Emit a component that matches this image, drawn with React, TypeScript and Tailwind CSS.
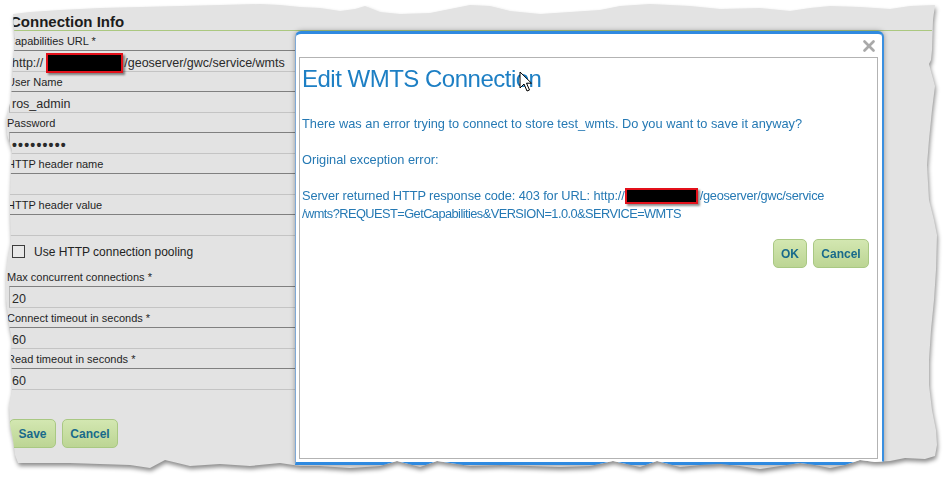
import { X } from "lucide-react";
import type { ReactNode } from "react";

function Redact({ className }: { className: string }) {
  return (
    <span
      className={
        "inline-block bg-black border-2 border-[#e3101a] shadow-[2px_2px_2px_rgba(0,0,0,0.45)] align-middle " +
        className
      }
    />
  );
}

function Field({ label, children }: { label: string; children?: ReactNode }) {
  return (
    <div>
      <div className="h-[19px] pt-[2px] leading-[17px] text-[11px] text-[#1f1f1f] whitespace-nowrap">{label}</div>
      <div className="ml-[2px] h-[22px] w-[600px] border-t border-b border-l border-t-[#808080] border-b-[#c4c4c4] border-l-[#b8b8b8] pl-[2px] pt-[4px] flex items-center text-[12.5px] text-[#2a2a2a] whitespace-nowrap">
        {children}
      </div>
    </div>
  );
}

function GreenButton({ children, className }: { children: ReactNode; className: string }) {
  return (
    <div
      className={
        "h-[29px] flex items-center justify-center rounded-[5px] border border-[#a9c883] bg-gradient-to-b from-[#d3e7b1] to-[#bcd594] text-[12px] font-bold text-[#196a8b] " +
        className
      }
    >
      {children}
    </div>
  );
}

export default function App() {
  return (
    <div className="w-[946px] h-[481px] bg-white overflow-hidden [font-family:'Liberation_Sans',Arial,sans-serif]">
      <div className="w-full h-full [filter:drop-shadow(1px_3px_2px_rgba(0,0,0,0.45))]">
        <div className="relative w-full h-full bg-[#e3e3e3] [clip-path:polygon(13px_14px,30px_12px,60px_10px,100px_8px,140px_7px,180px_6px,220px_5px,260px_4px,280px_5px,300px_7px,320px_8px,340px_11px,355px_9px,365px_6px,380px_12px,400px_14px,430px_13px,450px_9px,470px_5px,490px_6px,510px_11px,540px_14px,570px_12px,600px_10px,620px_6px,650px_4px,690px_6px,720px_9px,760px_8px,790px_11px,810px_8px,830px_6px,860px_7px,890px_9px,910px_6px,935px_5px,933px_20px,932px_50px,931px_60px,929px_64px,932px_75px,935px_86px,932px_110px,929px_140px,927px_165px,929px_200px,934px_220px,937px_235px,936px_270px,934px_300px,931px_330px,929px_360px,929px_385px,932px_410px,936px_430px,937px_445px,935px_456px,925px_459px,905px_458px,890px_461px,875px_462px,860px_460px,845px_465px,830px_468px,815px_465px,800px_463px,780px_466px,760px_469px,740px_466px,720px_464px,700px_465px,680px_467px,657px_461px,640px_467px,613px_461px,590px_466px,560px_467px,530px_466px,500px_465px,470px_466px,437px_461px,420px_467px,397px_461px,380px_466px,350px_468px,320px_466px,300px_466px,280px_463px,250px_466px,220px_464px,190px_466px,165px_460px,150px_468px,130px_465px,100px_464px,70px_463px,40px_463px,18px_463px,15px_455px,13px_440px,10px_425px,9px_405px,12px_390px,12px_375px,11px_355px,12px_340px,9px_325px,6px_300px,6px_272px,8px_255px,11px_240px,10px_215px,10px_195px,11px_170px,12px_150px,7px_135px,6px_118px,11px_100px,12px_83px,13px_62px,15px_42px,14px_28px)]">
          {/* Background form */}
          <div className="pt-[12px] pl-[7px]">
            <div className="w-[925px] h-[19px] pl-[3px] pt-[1px] text-[15px] font-bold leading-[18px] text-[#1c1c1c] border-b border-[#abc880]">
              Connection Info
            </div>
            <Field label="Capabilities URL *">
              <span>http://</span>
              <Redact className="w-[77px] h-[20px] ml-[3px]" />
              <span className="ml-[1px]">/geoserver/gwc/service/wmts</span>
            </Field>
            <Field label="User Name">ros_admin</Field>
            <Field label="Password">
              <span className="text-[14px] tracking-[1.2px] font-bold">•••••••••</span>
            </Field>
            <Field label="HTTP header name" />
            <Field label="HTTP header value" />
            <div className="h-[31px] flex items-center pl-[5px] gap-[9px]">
              <div className="w-[13px] h-[13px] border border-[#3c3c3c] bg-[#e8e8e8]" />
              <span className="text-[12px] text-[#222]">Use HTTP connection pooling</span>
            </div>
            <Field label="Max concurrent connections *">20</Field>
            <Field label="Connect timeout in seconds *">60</Field>
            <Field label="Read timeout in seconds *">60</Field>
            <div className="mt-[29px] ml-[2px] flex gap-[6px]">
              <GreenButton className="w-[47px]">Save</GreenButton>
              <GreenButton className="w-[56px]">Cancel</GreenButton>
            </div>
          </div>

          {/* Modal dialog */}
          <div className="absolute left-[295px] top-[31px] w-[589px] h-[434px] flex flex-col bg-white rounded-t-[6px] border-t-[3px] border-r-2 border-b-[3px] border-l border-t-[#2f8ae0] border-r-[#3a8fe0] border-b-[#2f8ae0] border-l-[#7fa9d6] shadow-[0_0_5px_rgba(0,0,0,0.35)]">
            <div className="h-[23px] flex justify-end pr-[4px] pt-[3px]">
              <X size={18} strokeWidth={3.6} color="#a9a9a9" />
            </div>
            <div className="flex-1 ml-[3px] mr-[4px] mb-[3px] border border-[#b3b3b3] pl-[2px] pt-[7px]">
              <div className="text-[24px] leading-[28px] tracking-[-0.5px] text-[#1d7fc4]">Edit WMTS Connection</div>
              <div className="mt-[22px] text-[12.8px] leading-[18px] text-[#2579b4] whitespace-nowrap">
                There was an error trying to connect to store test_wmts. Do you want to save it anyway?
                <br />
                <br />
                Original exception error:
                <br />
                <br />
                <span className="tracking-[-0.1px]">Server returned HTTP response code: 403 for URL: http://</span>
                <Redact className="w-[73px] h-[16px] -mt-[2px]" />
                <span className="ml-[2px] tracking-[-0.3px]">/geoserver/gwc/service</span>
                <br />
                <span className="tracking-[-0.55px]">/wmts?REQUEST=GetCapabilities&amp;VERSION=1.0.0&amp;SERVICE=WMTS</span>
              </div>
              <div className="mt-[16px] pr-[8px] flex justify-end gap-[6px]">
                <GreenButton className="w-[34px]">OK</GreenButton>
                <GreenButton className="w-[56px]">Cancel</GreenButton>
              </div>
            </div>
          </div>

          {/* Mouse cursor */}
          <svg className="absolute left-[519px] top-[71px]" width="14" height="22" viewBox="0 0 14 22">
            <path
              d="M1 1 L1 17 L5 13 L8 20 L10.5 19 L7.5 12.2 L12.5 12.2 Z"
              fill="#ffffff"
              stroke="#000000"
              strokeWidth="1"
              strokeLinejoin="round"
            />
          </svg>
        </div>
      </div>
    </div>
  );
}
